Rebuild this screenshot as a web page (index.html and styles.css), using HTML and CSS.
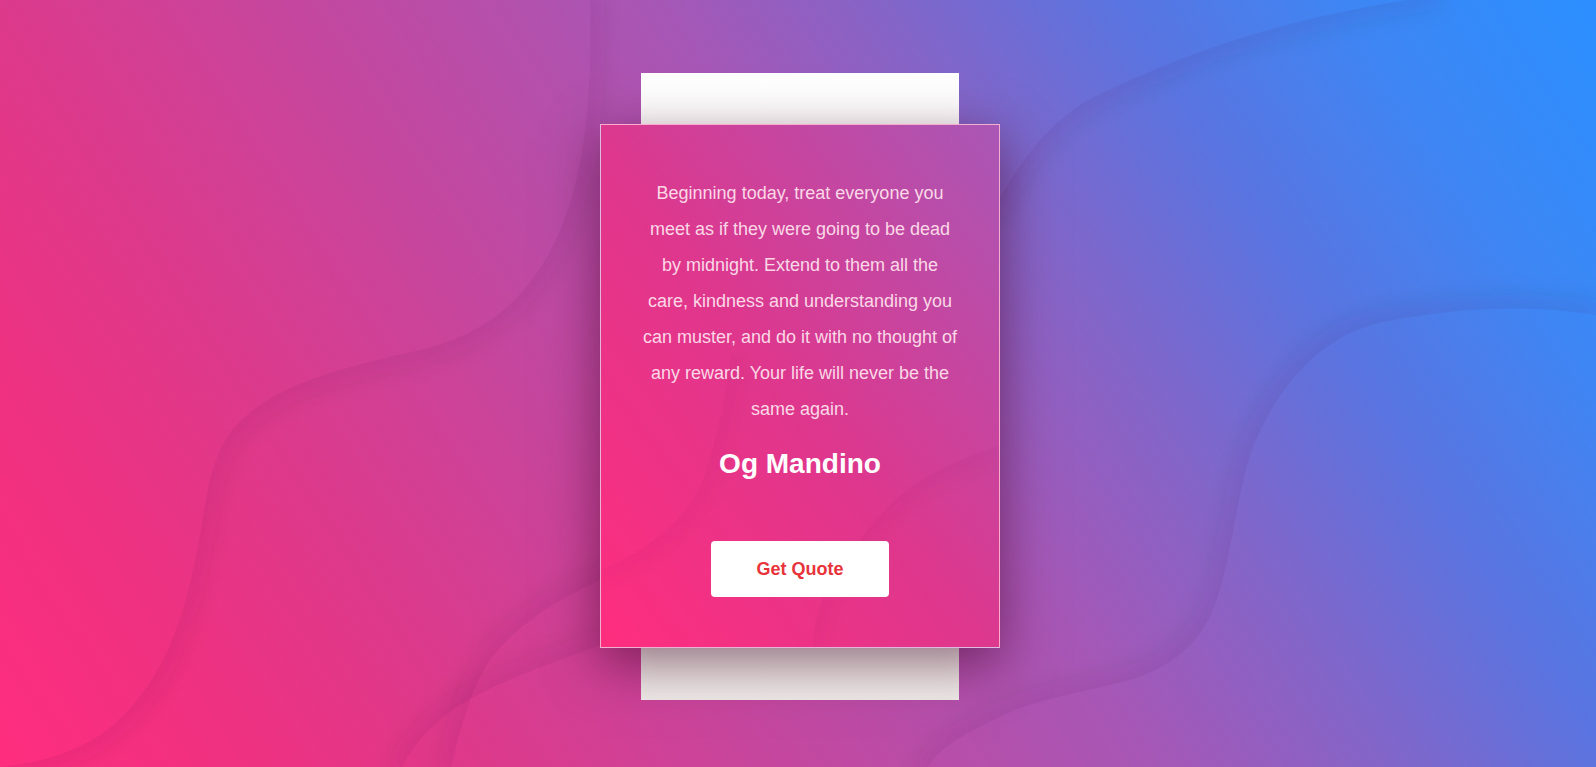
FILE: index.html
```html
<!DOCTYPE html>
<html lang="en">
<head>
<meta charset="utf-8">
<title>Quote</title>
<link rel="stylesheet" href="styles.css">
</head>
<body>
<main class="page">
  <svg class="waves" viewBox="0 0 1596 767" preserveAspectRatio="none" aria-hidden="true">
    <defs>
      <filter id="sb" filterUnits="userSpaceOnUse" x="-200" y="-200" width="2000" height="1200">
        <feGaussianBlur stdDeviation="10"/>
      </filter>
      <clipPath id="clA"><path d="M590,-5 C592,80 590,200 536,274 C510,310 480,335 420,350 C340,368 270,385 232,430 C205,465 205,520 195,560 C180,640 150,700 100,735 C70,755 30,765 -5,767 L-5,900 L1700,900 L1700,-5 Z"/></clipPath>
      <clipPath id="clB"><path d="M1440,-5 C1300,15 1200,45 1092,98 C1050,120 1020,160 990,215 L990,900 L1700,900 L1700,-5 Z"/></clipPath>
      <clipPath id="clC"><path d="M1600,316 C1560,308 1480,302 1379,323 C1320,337 1280,385 1256,440 C1238,480 1232,560 1215,605 C1200,645 1170,668 1130,680 C1080,693 1030,700 996,719 C960,735 935,752 925,772 L-5,772 L-5,-5 L1600,-5 Z"/></clipPath>
      <clipPath id="clD1"><path d="M620,572 C570,592 520,620 490,660 C470,690 460,730 450,772 L-5,772 L-5,-5 L620,-5 Z"/></clipPath>
      <clipPath id="clD2"><path d="M620,638 C560,660 500,680 460,705 C430,725 410,748 400,772 L-5,772 L-5,-5 L620,-5 Z"/></clipPath>
    </defs>
    <g class="wave-shadow">
      <g clip-path="url(#clA)"><path filter="url(#sb)" d="M590,-5 C592,80 590,200 536,274 C510,310 480,335 420,350 C340,368 270,385 232,430 C205,465 205,520 195,560 C180,640 150,700 100,735 C70,755 30,765 -5,767"/></g>
      <g clip-path="url(#clB)"><path filter="url(#sb)" d="M1440,-5 C1300,15 1200,45 1092,98 C1050,120 1020,160 990,215"/></g>
      <g clip-path="url(#clC)"><path filter="url(#sb)" d="M1600,316 C1560,308 1480,302 1379,323 C1320,337 1280,385 1256,440 C1238,480 1232,560 1215,605 C1200,645 1170,668 1130,680 C1080,693 1030,700 996,719 C960,735 935,752 925,772"/></g>
      <g clip-path="url(#clD1)"><path filter="url(#sb)" d="M620,572 C570,592 520,620 490,660 C470,690 460,730 450,772"/></g>
      <g clip-path="url(#clD2)"><path filter="url(#sb)" d="M620,638 C560,660 500,680 460,705 C430,725 410,748 400,772"/></g>
    </g>
  </svg>

  <div class="stack">
    <article class="card">
      <svg class="card-waves" viewBox="0 0 398 522" preserveAspectRatio="none" aria-hidden="true">
        <defs>
          <filter id="cb" filterUnits="userSpaceOnUse" x="-100" y="-100" width="600" height="800">
            <feGaussianBlur stdDeviation="8"/>
          </filter>
          <clipPath id="clK1"><path d="M130,230 C125,270 118,300 110,330 C100,370 80,410 -2,446 L-10,600 L400,600 L400,230 Z"/></clipPath>
          <clipPath id="clK2"><path d="M402,320 C370,330 330,345 300,370 C270,395 240,440 225,465 C215,490 212,505 212,525 L402,525 Z"/></clipPath>
        </defs>
        <g class="card-shadow">
          <g clip-path="url(#clK1)"><path filter="url(#cb)" d="M130,230 C125,270 118,300 110,330 C100,370 80,410 -2,446"/></g>
          <g clip-path="url(#clK2)"><path filter="url(#cb)" d="M402,320 C370,330 330,345 300,370 C270,395 240,440 225,465 C215,490 212,505 212,525"/></g>
        </g>
      </svg>
      <p class="quote">Beginning today, treat everyone you meet as if they were going to be dead by midnight. Extend to them all the care, kindness and understanding you can muster, and do it with no thought of any reward. Your life will never be the same again.</p>
      <h2 class="author">Og Mandino</h2>
      <button class="btn" type="button">Get Quote</button>
    </article>
  </div>
</main>
</body>
</html>
```

FILE: styles.css
```css
html, body {
  margin: 0;
  height: 100%;
}

body {
  font-family: "Liberation Sans", Arial, sans-serif;
  overflow: hidden;
}

.page {
  position: relative;
  box-sizing: border-box;
  height: 100vh;
  padding: 5px 0 0 4px;
  display: flex;
  align-items: center;
  justify-content: center;
  overflow: hidden;
  background: linear-gradient(57deg,
    #ff2d7e 0%,
    #ef3181 12%,
    #dc3a8c 24%,
    #c4479f 38%,
    #a757b6 55%,
    #8465c8 66%,
    #5a74e0 77%,
    #3e86f4 88%,
    #2b8fff 100%);
}

.waves {
  position: absolute;
  top: 0;
  left: 0;
  width: 100%;
  height: 100%;
}

.wave-shadow path {
  fill: none;
  stroke: rgba(70, 0, 60, 0.08);
  stroke-width: 28;
}

.stack {
  position: relative;
  z-index: 1;
}

.stack::before {
  content: "";
  position: absolute;
  top: -51px;
  bottom: -52px;
  left: 41px;
  right: 41px;
  background: linear-gradient(#ffffff, #f0ecea);
}

.card {
  position: relative;
  box-sizing: border-box;
  width: 400px;
  padding: 50px 40px 50px;
  border: 1px solid rgba(255, 255, 255, 0.6);
  display: flex;
  flex-direction: column;
  align-items: center;
  overflow: hidden;
  background: linear-gradient(to top right, #ff2d7e 0%, #de378d 48%, #a957b6 100%);
  box-shadow: 0 15px 50px rgba(60, 0, 30, 0.55);
}

.card-waves {
  position: absolute;
  top: 0;
  left: 0;
  width: 100%;
  height: 100%;
  pointer-events: none;
}

.card-shadow path {
  fill: none;
  stroke: rgba(90, 0, 60, 0.05);
  stroke-width: 26;
}

.quote {
  position: relative;
  margin: 0;
  font-size: 18px;
  line-height: 36px;
  color: #fbd8e6;
  text-align: center;
}

.author {
  position: relative;
  margin: 21px 0 0;
  font-size: 28px;
  line-height: 32px;
  font-weight: 700;
  color: #ffffff;
}

.btn {
  position: relative;
  margin-top: 61px;
  width: 178px;
  height: 56px;
  border: 0;
  border-radius: 4px;
  background: #ffffff;
  color: #e8333a;
  font: 700 18px "Liberation Sans", Arial, sans-serif;
  cursor: pointer;
}
```
